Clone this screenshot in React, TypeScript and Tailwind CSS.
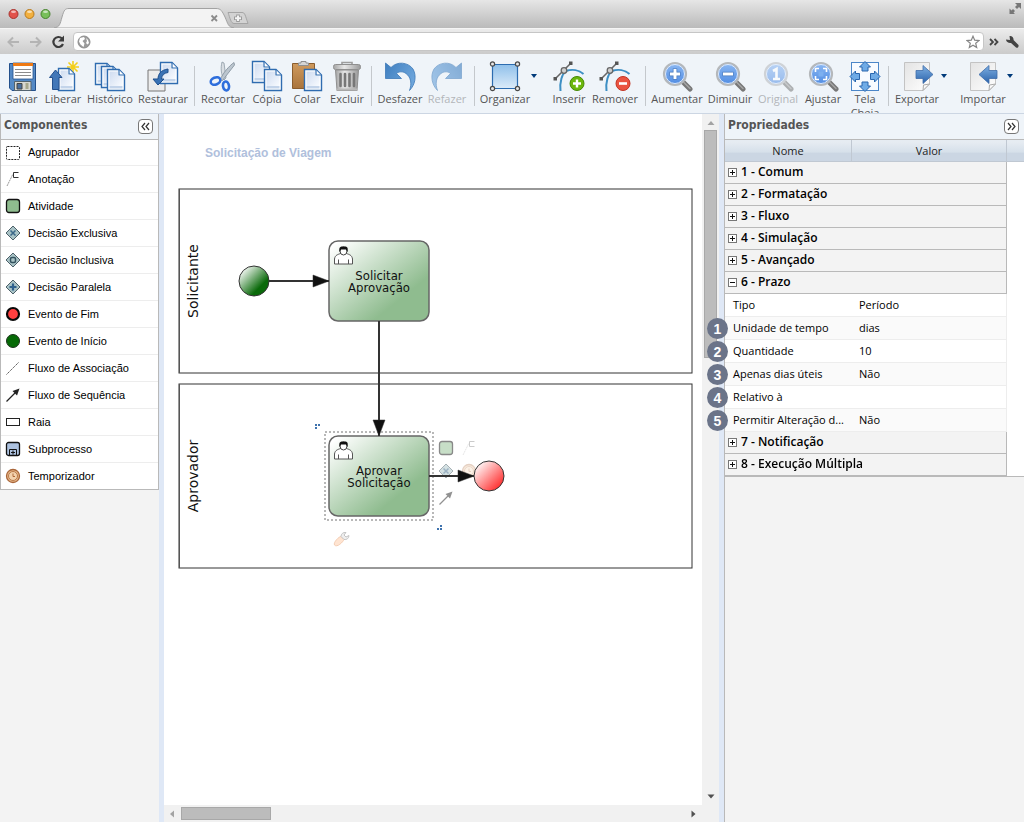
import type { ReactNode } from "react";
import clsx from "clsx";

/* ---------- shared gradients ---------- */

function Gradients() {
  return (
    <svg className="absolute h-0 w-0" aria-hidden="true">
      <defs>
        <linearGradient id="task" x1="0" y1="0" x2="1" y2="1">
          <stop offset="0.05" stopColor="#fff" />
          <stop offset="0.72" stopColor="#8fbc8f" />
        </linearGradient>
        <linearGradient id="start" x1="0.1" y1="0.1" x2="0.85" y2="0.85">
          <stop offset="0" stopColor="#fff" />
          <stop offset="0.8" stopColor="#0a6a0a" />
        </linearGradient>
        <linearGradient id="end" x1="0" y1="0" x2="1" y2="1">
          <stop offset="0.1" stopColor="#fff" />
          <stop offset="0.85" stopColor="#ff3333" />
        </linearGradient>
        <linearGradient id="page" x1="0" y1="0" x2="1" y2="1">
          <stop offset="0" stopColor="#cfdcf0" />
          <stop offset="1" stopColor="#f8fbff" />
        </linearGradient>
        <linearGradient id="blue" x1="0" y1="0" x2="0" y2="1">
          <stop offset="0" stopColor="#7fb0e2" />
          <stop offset="1" stopColor="#2a62ab" />
        </linearGradient>
        <linearGradient id="undo" x1="0" y1="0" x2="1" y2="0.6">
          <stop offset="0" stopColor="#3f7fc0" />
          <stop offset="1" stopColor="#6ea6dc" />
        </linearGradient>
        <linearGradient id="square" x1="0" y1="0" x2="0" y2="1">
          <stop offset="0" stopColor="#8fc0ea" />
          <stop offset="1" stopColor="#dcebf9" />
        </linearGradient>
        <linearGradient id="wood" x1="0" y1="0" x2="0" y2="1">
          <stop offset="0" stopColor="#cf9a5e" />
          <stop offset="1" stopColor="#a9743c" />
        </linearGradient>
        <linearGradient id="metal" x1="0" y1="0" x2="1" y2="0">
          <stop offset="0" stopColor="#a5a5a5" />
          <stop offset="0.4" stopColor="#e8e8e8" />
          <stop offset="1" stopColor="#9a9a9a" />
        </linearGradient>
        <linearGradient id="glass" x1="0" y1="0" x2="0" y2="1">
          <stop offset="0" stopColor="#8db9f3" />
          <stop offset="1" stopColor="#4f8be2" />
        </linearGradient>
        <linearGradient id="paper" x1="0" y1="0" x2="1" y2="1">
          <stop offset="0" stopColor="#e3e3e3" />
          <stop offset="1" stopColor="#fff" />
        </linearGradient>
      </defs>
    </svg>
  );
}

/* ---------- toolbar icons, 32x32 ---------- */

function Sheet({ x, y, w = 18, h = 22 }: { x: number; y: number; w?: number; h?: number }) {
  return (
    <g transform={`translate(${x} ${y})`} stroke="#2f6cb0">
      <path d={`M0.5 0.5H${w - 6}L${w - 0.5} 6V${h - 0.5}H0.5Z`} fill="#fff" strokeWidth="1.4" />
      <path d={`M2.5 2.5H${w - 7}V7H${w - 2.5}V${h - 5}H2.5Z`} fill="url(#page)" stroke="none" />
      <path d={`M2.5 ${h - 5}H${w - 2.5}V${h - 2.5}H2.5Z`} fill="#c3d4ea" stroke="none" />
      <path d={`M${w - 6} 1V6H${w - 1}`} fill="#fff" strokeWidth="1.2" />
    </g>
  );
}

function SaveIcon() {
  return (
    <>
      <path d="M3.5 3.5H29.5V30.5H6L3.5 28Z" fill="#5489c5" stroke="#23508c" />
      <path d="M7 3H27V19H7Z" fill="#fff" stroke="#23508c" strokeWidth="0.8" />
      <path d="M7 3H27V6H7Z" fill="#ef7a14" />
      <path d="M9 9.5H25M9 12.5H25M9 15.5H25" stroke="#8c8c8c" />
      <path d="M8.500 21.500H25V30.500H8.500Z" fill="#d8d8d2" stroke="#53636f" />
      <path d="M11 23.500H16V29H11Z" fill="#4a6f9d" stroke="#444" />
      <path d="M21 23V29" stroke="#a7a78c" strokeWidth="3" />
    </>
  );
}

function ReleaseIcon() {
  return (
    <>
      <path
        d="M26 1V13M20 7H32M21.500 2.500L30.500 11.500M30.500 2.500L21.500 11.500"
        stroke="#f3cf1c"
        strokeWidth="1.600"
      />
      <Sheet x={11} y={8} w={17} h={23} />
      <path d="M8.500 10L15 17.500H12V29.500H5.500V17.500H2.500Z" fill="#4277b8" stroke="#24508d" />
    </>
  );
}

function HistoryIcon() {
  return (
    <>
      <Sheet x={1} y={3} />
      <Sheet x={7} y={6} />
      <Sheet x={13} y={9} />
    </>
  );
}

function RestoreIcon() {
  return (
    <>
      <path d="M1 10H18V31H1Z" fill="#ececec" stroke="#777" />
      <Sheet x={13} y={2} w={18} h={22} />
      <path
        d="M21 9C14 10 11 14 11 19H6L11 25L17 19H14.500C15 15 17 13 21 12.500Z"
        fill="#3a72b4"
        stroke="#1f4f8c"
      />
    </>
  );
}

function CutIcon() {
  return (
    <>
      <path d="M15 2C13.500 8 14 14 17 20L19 18L17 3Z" fill="#d9dee3" stroke="#8d9aa6" strokeWidth="0.800" />
      <path d="M27 2.500C22 6 16 13 13 20L15.500 20.500L27.500 5Z" fill="#bcc6cf" stroke="#7f8d99" strokeWidth="0.800" />
      <ellipse cx="8.500" cy="21" rx="5" ry="3.500" fill="none" stroke="#2e6edc" strokeWidth="2.600" transform="rotate(-22 8.500 21)" />
      <ellipse cx="19" cy="26" rx="3" ry="4.500" fill="none" stroke="#2e6edc" strokeWidth="2.600" transform="rotate(-8 19 26)" />
    </>
  );
}

function CopyIcon() {
  return (
    <>
      <Sheet x={1} y={1} w={18} h={22} />
      <Sheet x={13} y={9} w={18} h={22} />
    </>
  );
}

function PasteIcon() {
  return (
    <>
      <path d="M1.500 3.500H23.500V28.500H1.500Z" fill="url(#wood)" stroke="#8a5d2e" />
      <path d="M7.500 5.500V3H10V1.500H15V3H17.500V5.500Z" fill="#d5d5d5" stroke="#8f8f8f" />
      <Sheet x={13} y={9} w={18} h={22} />
    </>
  );
}

function TrashIcon() {
  return (
    <>
      <path d="M11 4.500V2.500H21V4.500" fill="none" stroke="#9d9d9d" strokeWidth="1.600" />
      <rect x="2.500" y="4.500" width="27" height="5" rx="2" fill="url(#metal)" stroke="#8f8f8f" />
      <path d="M4.500 10H27.500L26 30.500H6Z" fill="url(#metal)" stroke="#8f8f8f" />
      <path d="M9.500 14V26M14 14V26M18.500 14V26M23 14V26" stroke="#777" strokeWidth="2.600" strokeLinecap="round" />
      <path d="M5 29.500H27" stroke="#b8b8b8" strokeWidth="2" />
    </>
  );
}

function UndoIcon() {
  return (
    <path
      d="M1.500 3L7 7.500C13 1 24 2 29 9C33 16 31 25 25.500 30.500C28 24 27 17 22 13.500C18.500 11 15 11.500 12.500 13.500L17.500 18.500H1.500Z"
      fill="url(#undo)"
      stroke="#3c78b8"
      strokeWidth="0.800"
    />
  );
}

function RedoIcon() {
  return (
    <g opacity="0.620" transform="translate(32 0) scale(-1 1)">
      <UndoIcon />
    </g>
  );
}

function ArrangeIcon() {
  return (
    <>
      <path d="M3.500 4.500H28.500V28.500H3.500Z" fill="url(#square)" stroke="#2c6cb0" strokeWidth="1.200" />
      {[3.5, 28.5].map((cx) =>
        [4, 28.5].map((cy) => (
          <circle key={`${cx}-${cy}`} cx={cx} cy={cy} r="2.100" fill="#e8e8e8" stroke="#4a4a4a" strokeWidth="1.200" />
        )),
      )}
    </>
  );
}

function Curve() {
  return (
    <>
      <path d="M7.500 31C6.500 22 9 14 13 11C19 9 26 10 30.500 14" fill="none" stroke="#3d8fc4" strokeWidth="2" />
      <path d="M2 19L18 3" stroke="#666" strokeWidth="1.600" />
      <rect x="16" y="1.500" width="3.500" height="3.500" fill="#555" />
      <rect x="0.500" y="17" width="3.500" height="3.500" fill="#555" />
      <circle cx="11" cy="10.500" r="2.800" fill="#cfcfcf" stroke="#666" strokeWidth="1.300" />
    </>
  );
}

function InsertIcon() {
  return (
    <>
      <Curve />
      <circle cx="24" cy="23.500" r="7" fill="#6cb70c" stroke="#478a06" />
      <path d="M24 19.500V27.500M20 23.500H28" stroke="#fff" strokeWidth="2.400" />
    </>
  );
}

function RemoveIcon() {
  return (
    <>
      <Curve />
      <circle cx="24" cy="23.500" r="7" fill="#ea5441" stroke="#c23424" />
      <path d="M20 23.500H28" stroke="#fff" strokeWidth="2.600" />
    </>
  );
}

function Lens({ children }: { children: ReactNode }) {
  return (
    <>
      <path d="M22 22L29 29" stroke="#777" strokeWidth="5" strokeLinecap="round" />
      <path d="M23 22.500L29 28.500" stroke="#a5a5a5" strokeWidth="1.500" strokeLinecap="round" />
      <circle cx="14" cy="14" r="11" fill="url(#glass)" stroke="#b5b8bb" strokeWidth="2.200" />
      <circle cx="14" cy="14" r="9.500" fill="none" stroke="#dfeafa" strokeWidth="1" />
      {children}
    </>
  );
}

function ZoomInIcon() {
  return (
    <Lens>
      <path d="M14 8.500V19.500M8.500 14H19.500" stroke="#4574b7" strokeWidth="4.400" />
      <path d="M14 9V19M9 14H19" stroke="#fff" strokeWidth="3" />
    </Lens>
  );
}

function ZoomOutIcon() {
  return (
    <Lens>
      <path d="M8.500 14H19.500" stroke="#4574b7" strokeWidth="4.400" />
      <path d="M9 14H19" stroke="#fff" strokeWidth="3" />
    </Lens>
  );
}

function ZoomResetIcon() {
  return (
    <g opacity="0.550">
      <Lens>
        <path d="M11 11L14.500 9V19M11 19H18" fill="none" stroke="#fff" strokeWidth="2.600" />
      </Lens>
    </g>
  );
}

function FitIcon() {
  return (
    <Lens>
      <path
        d="M8.500 12V8.500H12M16 8.500H19.500V12M19.500 16V19.500H16M12 19.500H8.500V16"
        fill="none"
        stroke="#fff"
        strokeWidth="1.600"
      />
      <rect x="11.500" y="11.500" width="5" height="5" fill="#7db0f0" />
    </Lens>
  );
}

function FullScreenIcon() {
  const arrow = "M16 1.500L21.500 7H19V11H13V7H10.500Z";
  return (
    <>
      <rect x="2.500" y="2.500" width="27" height="28" fill="#f8fbff" stroke="#4b86c8" />
      {[0, 90, 180, 270].map((angle) => (
        <path key={angle} d={arrow} transform={`rotate(${angle} 16 16.500)`} fill="#6fabe6" stroke="#2a67ae" />
      ))}
    </>
  );
}

function ExportIcon() {
  return (
    <>
      <path d="M3.500 2.500H28.500V24L22 30.500H3.500Z" fill="url(#paper)" stroke="#c3c3c3" />
      <path d="M22 30.500L22.500 25L28.500 24Z" fill="#fafafa" stroke="#aaa" />
      <path d="M15 10.500H22V5.500L32 14.500L22 23.500V18.500H15Z" fill="url(#blue)" stroke="#3f6ca8" strokeWidth="0.800" />
    </>
  );
}

function ImportIcon() {
  return (
    <>
      <path d="M3.500 2.500H28.500V24L22 30.500H3.500Z" fill="url(#paper)" stroke="#c3c3c3" />
      <path d="M22 30.500L22.500 25L28.500 24Z" fill="#fafafa" stroke="#aaa" />
      <path d="M30 10.500H22V5.500L12 14.500L22 23.500V18.500H30Z" fill="url(#blue)" stroke="#3f6ca8" strokeWidth="0.800" />
    </>
  );
}

/* ---------- palette icons, 16x16 ---------- */

function GroupShape() {
  return <rect x="1.500" y="1.500" width="13" height="13" rx="1" fill="#fff" stroke="#222" strokeDasharray="2 1" />;
}

function NoteShape() {
  return (
    <>
      <path d="M2 15L8 3" stroke="#999" strokeDasharray="2 0.600" />
      <path d="M13.500 1.500H8.500V6.500H13.500" fill="none" stroke="#333" />
    </>
  );
}

function TaskShape() {
  return <rect x="1.500" y="1.500" width="13" height="13" rx="2.500" fill="#8fbc8f" stroke="#111" strokeWidth="1.300" />;
}

function Diamond() {
  return <path d="M8 1L15 8L8 15L1 8Z" fill="#a9c3c6" stroke="#4c6069" />;
}

function ExclusiveShape() {
  return (
    <>
      <Diamond />
      <path d="M5.500 5.500L10.500 10.500M10.500 5.500L5.500 10.500" stroke="#3a6788" strokeWidth="1.500" />
    </>
  );
}

function InclusiveShape() {
  return (
    <>
      <Diamond />
      <rect x="5.500" y="5.500" width="5" height="5" rx="1.500" fill="#a9c3c6" stroke="#34535f" strokeWidth="1.500" />
    </>
  );
}

function ParallelShape() {
  return (
    <>
      <Diamond />
      <path d="M8 4.500V11.500M4.500 8H11.500" stroke="#2f618e" strokeWidth="2.200" />
    </>
  );
}

function EndShape() {
  return <circle cx="8" cy="8" r="6" fill="#ff4040" stroke="#080808" strokeWidth="2.200" />;
}

function StartShape() {
  return <circle cx="8" cy="8" r="6.500" fill="#066a06" stroke="#1c331c" />;
}

function AssociationShape() {
  return <path d="M1.500 14.500L14 2" stroke="#555" strokeDasharray="1.500 0.700" />;
}

function SequenceShape() {
  return (
    <>
      <path d="M1.500 14.500L10 6" stroke="#222" strokeWidth="1.300" />
      <path d="M14.500 1.500L12 8.500L7.500 4Z" fill="#222" />
    </>
  );
}

function LaneShape() {
  return <rect x="1.500" y="4.500" width="13" height="7" fill="#fff" stroke="#222" />;
}

function SubprocessShape() {
  return (
    <>
      <rect x="1.500" y="1.500" width="13" height="13" rx="2" fill="#adc2e0" stroke="#111" strokeWidth="1.300" />
      <path d="M4.500 14V8.500H11.500V14M8 9.500V13.500M6 11.500H10" fill="none" stroke="#111" />
    </>
  );
}

function TimerShape() {
  return (
    <>
      <circle cx="8" cy="8" r="6.500" fill="#e8b88a" stroke="#a9663a" strokeWidth="1.300" />
      <circle cx="8" cy="8" r="4.500" fill="#f3d2ae" stroke="#b97a4a" />
      <path d="M8 5.500V8.500H10" fill="none" stroke="#b06a3a" />
    </>
  );
}

/* ---------- browser chrome ---------- */

function TabStrip() {
  return (
    <div className="flex h-7 items-start bg-linear-to-b from-[#e6e6e6] to-[#bababa]">
      <svg className="h-7 w-[252px] shrink-0" aria-hidden="true">
        {[
          ["#e2524b", "#a8332e", 13.5],
          ["#f2b03f", "#b87a1e", 29.5],
          ["#78bf5a", "#48832f", 45.5],
        ].map(([fill, stroke, cx]) => (
          <g key={cx}>
            <circle cx={cx} cy="14" r="4.500" fill={fill as string} stroke={stroke as string} />
            <ellipse cx={cx} cy="11.800" rx="2.500" ry="1.300" fill="#fff" opacity="0.600" />
          </g>
        ))}
        <path
          d="M54 28C60 27 60 24 62 17C64 10 65 8.500 69 8.500H216C221 8.500 222 11 225 17C228 24 228 27 234 28Z"
          fill="#f3f3f3"
          stroke="#a2a2a2"
        />
        <path d="M211.500 15.500L217 21M217 15.500L211.500 21" stroke="#8c8c8c" strokeWidth="1.800" />
        <path
          d="M228 12.500H242C245 12.500 245 15 248 23.500H234C231 23.500 230 18 228 12.500Z"
          fill="#d3d3d3"
          stroke="#a5a5a5"
        />
        <path d="M238 14.500V22M234 18.300H242" stroke="#9b9b9b" strokeWidth="3.600" />
        <path d="M238 15.500V21M235 18.300H241" stroke="#f4f4f4" strokeWidth="2" />
      </svg>
      <div className="flex flex-1 justify-end pt-0.5 pr-0.5">
        <svg width="14" height="14" viewBox="0 0 14 14" fill="#777" aria-hidden="true">
          <path d="M7 1H13V7L11 5L9 7L7 5L9 3Z" />
          <path d="M7 12H1.500V6.500L3.500 8.500L5 7L7 9L5.500 10.500Z" />
        </svg>
      </div>
    </div>
  );
}

function AddressBar() {
  return (
    <div className="flex h-[26px] items-center border-t border-[#f5f5f5] bg-linear-to-b from-[#ececec] to-[#cbcbcb]">
      <div className="flex w-[73px] shrink-0 items-center">
        <button type="button" aria-label="Voltar" className="ml-1.5 h-4 w-4">
          <svg viewBox="0 0 16 16" fill="none" stroke="#b4b4b4" strokeWidth="2">
            <path d="M13 8H3M7 3.500L2.500 8L7 12.500" />
          </svg>
        </button>
        <button type="button" aria-label="Avançar" className="ml-1.5 h-4 w-4">
          <svg viewBox="0 0 16 16" fill="none" stroke="#b4b4b4" strokeWidth="2">
            <path d="M2 8H12M8 3.500L12.500 8L8 12.500" />
          </svg>
        </button>
        <button type="button" aria-label="Recarregar" className="ml-1.5 h-4 w-4">
          <svg viewBox="0 0 16 16" fill="none" stroke="#3c3c3c" strokeWidth="2.200">
            <path d="M12 4.500A5 5 0 1 0 13 10" />
            <path d="M14 1.500V7.500H8Z" fill="#3c3c3c" stroke="none" />
          </svg>
        </button>
      </div>
      <div className="flex h-[19px] min-w-0 flex-1 items-center rounded-sm border border-[#c6c6c6] bg-white pr-[3px] pl-[3px]">
        <svg width="14" height="14" viewBox="0 0 14 14" aria-hidden="true">
          <circle cx="7" cy="7" r="6" fill="#9b9b9b" stroke="#8d8d8d" />
          <path d="M3 3L7 2L8 4L5.500 6L7.500 8.500L6.500 12L3.500 9.500L2 6.500ZM9 3L11 5L12 8L10.500 9.500L9 8L10 6Z" fill="#fff" />
        </svg>
        <input type="text" aria-label="Endereço" className="min-w-0 flex-1 px-1 text-xs outline-none" />
        <svg width="14" height="14" viewBox="0 0 14 14" aria-hidden="true">
          <path
            d="M7 1.200L8.700 5.200L13 5.600L9.700 8.300L10.700 12.600L7 10.300L3.300 12.600L4.300 8.300L1 5.600L5.300 5.200Z"
            fill="#fff"
            stroke="#858585"
            strokeWidth="1.200"
          />
        </svg>
      </div>
      <button type="button" aria-label="Mais extensões" className="ml-1 h-4 w-3">
        <svg viewBox="0 0 12 16" fill="none" stroke="#444" strokeWidth="1.800">
          <path d="M2 5L5 8L2 11M6.500 5L9.500 8L6.500 11" />
        </svg>
      </button>
      <button type="button" aria-label="Configurações" className="mx-1 h-4 w-4">
        <svg viewBox="0 0 16 16">
          <path d="M2 5.500L6 6L5.500 2C8 1.500 10 4 9.500 6L14.500 11C15 13 13.500 14.500 12 13.500L7 9C5 9.500 2 8 2 5.500Z" fill="#444" />
        </svg>
      </button>
    </div>
  );
}

/* ---------- application toolbar ---------- */

type Tool = {
  label: string;
  width: string;
  icon: () => ReactNode;
  disabled?: boolean;
  menu?: boolean;
};

const toolGroups: Tool[][] = [
  [
    { label: "Salvar", width: "w-8", icon: SaveIcon },
    { label: "Liberar", width: "w-[34px]", icon: ReleaseIcon },
    { label: "Histórico", width: "w-11", icon: HistoryIcon },
    { label: "Restaurar", width: "w-[46px]", icon: RestoreIcon },
  ],
  [
    { label: "Recortar", width: "w-10", icon: CutIcon },
    { label: "Cópia", width: "w-8", icon: CopyIcon },
    { label: "Colar", width: "w-8", icon: PasteIcon },
    { label: "Excluir", width: "w-8", icon: TrashIcon },
  ],
  [
    { label: "Desfazer", width: "w-10", icon: UndoIcon },
    { label: "Refazer", width: "w-[38px]", icon: RedoIcon, disabled: true },
  ],
  [
    { label: "Organizar", width: "w-11", icon: ArrangeIcon, menu: true },
    { label: "Inserir", width: "w-8", icon: InsertIcon },
    { label: "Remover", width: "w-11", icon: RemoveIcon },
  ],
  [
    { label: "Aumentar", width: "w-[46px]", icon: ZoomInIcon },
    { label: "Diminuir", width: "w-11", icon: ZoomOutIcon },
    { label: "Original", width: "w-9", icon: ZoomResetIcon, disabled: true },
    { label: "Ajustar", width: "w-[38px]", icon: FitIcon },
    { label: "Tela\nCheia", width: "w-[30px]", icon: FullScreenIcon },
  ],
  [
    { label: "Exportar", width: "w-10", icon: ExportIcon, menu: true },
    { label: "Importar", width: "w-10", icon: ImportIcon, menu: true },
  ],
];

function ToolButton({ tool }: { tool: Tool }) {
  const Icon = tool.icon;
  return (
    <button type="button" disabled={tool.disabled} className="flex shrink-0 items-start">
      <span className={clsx("flex flex-col items-center", tool.width)}>
        <svg className="h-8 w-8 shrink-0" viewBox="0 0 32 32" fill="none" aria-hidden="true">
          <Icon />
        </svg>
        <span
          className={clsx(
            "text-center text-[11px] leading-[14px] whitespace-pre",
            tool.disabled ? "text-[#b3b6b9]" : "text-[#555]",
          )}
        >
          {tool.label}
        </span>
      </span>
      {tool.menu && (
        <span className="flex h-8 w-[18px] items-center justify-center pr-1">
          <svg width="6" height="4" viewBox="0 0 6 4" aria-hidden="true">
            <path d="M0 0H6L3 4Z" fill="#003a7a" />
          </svg>
        </span>
      )}
    </button>
  );
}

function Toolbar() {
  return (
    <div className="flex h-[60px] items-start gap-2 overflow-hidden border-b border-[#ccd6e3] bg-[#eff4f9] pt-1.5 pl-1.5 font-['Open_Sans',sans-serif]">
      {toolGroups.map((group, index) => (
        <div key={index} className="flex items-start gap-2">
          {index > 0 && <div className="mt-1.5 h-10 w-px bg-[#c4c8cc]" />}
          {group.map((tool) => (
            <ToolButton key={tool.label} tool={tool} />
          ))}
        </div>
      ))}
    </div>
  );
}

/* ---------- side panels ---------- */

function PanelHeader({ title, direction }: { title: string; direction: "left" | "right" }) {
  return (
    <div className="flex h-[26px] items-center justify-between border-b border-[#b9b9b9] bg-[#eff4f9] pr-[5px] pl-[3px]">
      <h2 className="pb-1 font-['DejaVu_Sans_Condensed','DejaVu_Sans',sans-serif] text-xs leading-4 font-bold text-[#555]">
        {title}
      </h2>
      <button
        type="button"
        aria-label={`Recolher ${title}`}
        className="mb-px flex h-[15px] w-[15px] items-center justify-center rounded-sm border border-[#777] bg-white"
      >
        <svg width="9" height="9" viewBox="0 0 9 9" fill="none" stroke="#333" strokeWidth="1.200">
          {direction === "left" ? (
            <path d="M4 1L1 4.500L4 8M8 1L5 4.500L8 8" />
          ) : (
            <path d="M1 1L4 4.500L1 8M5 1L8 4.500L5 8" />
          )}
        </svg>
      </button>
    </div>
  );
}

const components = [
  { label: "Agrupador", icon: GroupShape },
  { label: "Anotação", icon: NoteShape },
  { label: "Atividade", icon: TaskShape },
  { label: "Decisão Exclusiva", icon: ExclusiveShape },
  { label: "Decisão Inclusiva", icon: InclusiveShape },
  { label: "Decisão Paralela", icon: ParallelShape },
  { label: "Evento de Fim", icon: EndShape },
  { label: "Evento de Início", icon: StartShape },
  { label: "Fluxo de Associação", icon: AssociationShape },
  { label: "Fluxo de Sequência", icon: SequenceShape },
  { label: "Raia", icon: LaneShape },
  { label: "Subprocesso", icon: SubprocessShape },
  { label: "Temporizador", icon: TimerShape },
];

function ComponentsPanel() {
  return (
    <aside className="w-[159px] shrink-0">
      <div className="border-x border-b border-[#b9b9b9] bg-white">
        <PanelHeader title="Componentes" direction="left" />
        <ul>
          {components.map(({ label, icon: Icon }) => (
            <li
              key={label}
              className="flex h-[27px] items-center gap-[7px] border-b border-[#ededed] pl-1 font-['Liberation_Sans',Arial,sans-serif] text-[11px] text-black first:h-[26px] last:h-[26px] last:border-b-0"
            >
              <svg width="16" height="16" viewBox="0 0 16 16" fill="none" aria-hidden="true">
                <Icon />
              </svg>
              {label}
            </li>
          ))}
        </ul>
      </div>
    </aside>
  );
}

type Property = { name: string; value: string; badge?: number };

const propertyGroups: { title: string; rows?: Property[] }[] = [
  { title: "1 - Comum" },
  { title: "2 - Formatação" },
  { title: "3 - Fluxo" },
  { title: "4 - Simulação" },
  { title: "5 - Avançado" },
  {
    title: "6 - Prazo",
    rows: [
      { name: "Tipo", value: "Período" },
      { name: "Unidade de tempo", value: "dias", badge: 1 },
      { name: "Quantidade", value: "10", badge: 2 },
      { name: "Apenas dias úteis", value: "Não", badge: 3 },
      { name: "Relativo à", value: "", badge: 4 },
      { name: "Permitir Alteração d...", value: "Não", badge: 5 },
    ],
  },
  { title: "7 - Notificação" },
  { title: "8 - Execução Múltipla" },
];

function PropertiesPanel() {
  return (
    <aside className="w-[300px] shrink-0 border-l border-[#b9b9b9]">
      <PanelHeader title="Propriedades" direction="right" />
      <table className="w-full table-fixed border-separate border-spacing-0 border-b border-[#b9b9b9] bg-white font-['Open_Sans',sans-serif] text-[11px] text-black">
        <thead>
          <tr className="h-[22px] bg-linear-to-b from-[#e6ecf2] from-10% via-[#d6e0ea] via-55% to-[#cbd6e3] to-60% text-[#222]">
            <th scope="col" className="w-[127px] border-r border-b border-[#c0c8d2] p-0 pt-0.5 font-normal">
              Nome
            </th>
            <th scope="col" className="border-r border-b border-[#c0c8d2] p-0 pt-0.5 font-normal">
              Valor
            </th>
            <td className="w-[17px] border-b border-[#c0c8d2] p-0" />
          </tr>
        </thead>
        {propertyGroups.map((group) => (
          <tbody key={group.title}>
            <tr className="h-[22px]">
              <th
                scope="colgroup"
                colSpan={2}
                className="border-r border-b border-[#b9b9b9] bg-[#f3f3f3] p-0 pb-px pl-[3px] text-left text-xs leading-4 font-semibold"
              >
                <button type="button" className="flex items-center gap-1" aria-expanded={Boolean(group.rows)}>
                  <svg width="9" height="9" viewBox="0 0 9 9" aria-hidden="true">
                    <rect x="0.500" y="0.500" width="8" height="8" fill="#fff" stroke="#777" />
                    <path d={group.rows ? "M2 4.500H7" : "M2 4.500H7M4.500 2V7"} stroke="#111" />
                  </svg>
                  {group.title}
                </button>
              </th>
              <td className="p-0" />
            </tr>
            {group.rows?.map((row, index) => {
              const shade = index % 2 === 1 && "bg-[#fafafa]";
              return (
                <tr key={row.name} className="h-[23px]">
                  <td className={clsx("relative border-b border-[#ededed] p-0 pl-2 whitespace-nowrap", shade)}>
                    {row.badge && (
                      <span className="absolute top-px -left-[18px] flex h-[21px] w-[21px] items-center justify-center rounded-full bg-[#6b7489] font-['Liberation_Sans',Arial,sans-serif] text-sm font-bold text-white">
                        {row.badge}
                      </span>
                    )}
                    {row.name}
                  </td>
                  <td className={clsx("border-r border-b border-[#ededed] p-0 pl-[7px]", shade)}>{row.value}</td>
                  <td className="p-0" />
                </tr>
              );
            })}
          </tbody>
        ))}
      </table>
    </aside>
  );
}

/* ---------- diagram ---------- */

function Lane({ y, label }: { y: number; label: string }) {
  return (
    <g>
      <rect x="15" y={y} width="513" height="184" fill="#fff" stroke="#333" />
      <path d={`M15.500 ${y}V${y + 184}`} stroke="#555" />
      <text
        transform={`translate(34 ${y + 92}) rotate(-90)`}
        textAnchor="middle"
        className="font-['DejaVu_Sans',sans-serif]"
        fontSize="14"
        fill="#111"
      >
        {label}
      </text>
    </g>
  );
}

function Task({ y, lines }: { y: number; lines: [string, string] }) {
  return (
    <g transform={`translate(165 ${y})`}>
      <rect width="100" height="80" rx="9" fill="url(#task)" stroke="#666" strokeWidth="1.500" />
      <path
        d="M5.500 23V18C6 14 9 13.500 11.500 12.500V10H17.500V12.500C20 13.500 23 14 23.500 18V23Z"
        fill="#fff"
        stroke="#555"
      />
      <path d="M9.500 23V18.500M19.500 23V18.500" stroke="#555" />
      <ellipse cx="14.500" cy="10" rx="3.500" ry="4" fill="#fff" stroke="#444" />
      <path d="M10.500 11C9.500 5.500 12 5.500 14.500 5.500C17.500 5.500 19.500 5.500 18.500 11L17 8.500H12Z" fill="#111" />
      <g fontSize="13" fill="#111" textAnchor="middle">
        <text x="50" y="39">
          {lines[0]}
        </text>
        <text x="50" y="51">
          {lines[1]}
        </text>
      </g>
    </g>
  );
}

function Flow({ from, to }: { from: [number, number]; to: [number, number] }) {
  const angle = (Math.atan2(to[1] - from[1], to[0] - from[0]) * 180) / Math.PI;
  return (
    <g>
      <path d={`M${from[0]} ${from[1]}L${to[0]} ${to[1]}`} stroke="#333" strokeWidth="2" />
      <path d="M0 0L-16 -6V6Z" transform={`translate(${to[0]} ${to[1]}) rotate(${angle})`} fill="#111" stroke="#333" strokeWidth="0.500" />
    </g>
  );
}

function Diagram() {
  return (
    <svg
      className="min-h-[460px] min-w-0 flex-1 bg-white font-['DejaVu_Sans_Condensed','DejaVu_Sans',sans-serif]"
      fill="none"
      role="img"
      aria-label="Solicitação de Viagem"
    >
      <text
        x="41"
        y="43"
        className="font-['Liberation_Sans',Arial,sans-serif] font-bold"
        fontSize="12"
        fill="#b0c0dc"
      >
        Solicitação de Viagem
      </text>
      <Lane y={75} label="Solicitante" />
      <Lane y={270} label="Aprovador" />

      <Task y={127} lines={["Solicitar", "Aprovação"]} />
      <Task y={322} lines={["Aprovar", "Solicitação"]} />

      <circle cx="90" cy="167" r="15" fill="url(#start)" stroke="#333" />

      {/* selection frame with its handles */}
      <rect x="161" y="318" width="108" height="88" stroke="#b8b8b8" strokeWidth="2" strokeDasharray="2 2" />
      <path d="M151 310h2v2h-2zM154 310h2v2h-2zM151 313h2v2h-2z" fill="#3f73ae" />
      <path d="M276 411h2v2h-2zM276 414h2v2h-2zM273 414h2v2h-2z" fill="#3f73ae" />

      {/* quick-add shortcuts next to the selected task */}
      <g opacity="0.500">
        <g transform="translate(274 326)">
          <TaskShape />
        </g>
        <g transform="translate(297 326)" opacity="0.500">
          <NoteShape />
        </g>
        <g transform="translate(274 349)">
          <ExclusiveShape />
        </g>
        <g transform="translate(297 349)" opacity="0.600">
          <TimerShape />
        </g>
        <g transform="translate(274 376)">
          <SequenceShape />
        </g>
        <g transform="translate(169 417)">
          <path d="M1.500 14C0 11.500 6 5.500 8 5.500L11 8.500C10 11 4 17 1.500 14Z" fill="#ffc9a3" stroke="#e79a68" />
          <path d="M8 5.500C8 3 10 1 13 1.500L11 4L13 6L16 4.500C16 7.500 13.500 9 11 8.500Z" fill="#ddd" stroke="#888" />
        </g>
      </g>

      <Flow from={[105, 167]} to={[165, 167]} />
      <Flow from={[215, 207]} to={[215, 322]} />
      <Flow from={[265, 362]} to={[310, 362]} />
      <circle cx="325" cy="362" r="15" fill="url(#end)" stroke="#333" />
    </svg>
  );
}

function ScrollArrow({ d, idle }: { d: string; idle?: boolean }) {
  return (
    <svg className="h-4 w-4 shrink-0" viewBox="0 0 16 16" aria-hidden="true">
      <path d={d} fill={idle ? "#a3a3a3" : "#505050"} />
    </svg>
  );
}

function Canvas() {
  return (
    <main className="flex min-w-0 flex-1 flex-col">
      <div className="flex flex-1">
        <Diagram />
        <div className="flex w-[17px] flex-col items-center bg-[#f1f1f1] pb-px">
          <ScrollArrow d="M4.500 11H11.500L8 7Z" idle />
          <div className="h-[228px] w-[13px] border border-[#a8a8a8] bg-[#bcbcbc]" />
          <div className="flex-1" />
          <ScrollArrow d="M4.500 6.500H11.500L8 10.500Z" />
        </div>
      </div>
      <div className="flex h-[17px] items-center bg-[#f1f1f1] pr-[18px]">
        <ScrollArrow d="M10 4.500V11.500L6 8Z" idle />
        <div className="ml-px h-[13px] w-[90px] border border-[#a8a8a8] bg-[#bcbcbc]" />
        <div className="flex-1" />
        <ScrollArrow d="M6.500 4.500V11.500L10.500 8Z" />
      </div>
    </main>
  );
}

export default function App() {
  return (
    <div className="flex min-h-screen flex-col bg-[#f3f3f3]">
      <Gradients />
      <TabStrip />
      <AddressBar />
      <Toolbar />
      <div className="flex flex-1">
        <ComponentsPanel />
        <div className="w-[5px] shrink-0 bg-[#dfe8f6]" />
        <Canvas />
        <div className="w-[5px] shrink-0 bg-[#dfe8f6]" />
        <PropertiesPanel />
      </div>
    </div>
  );
}
